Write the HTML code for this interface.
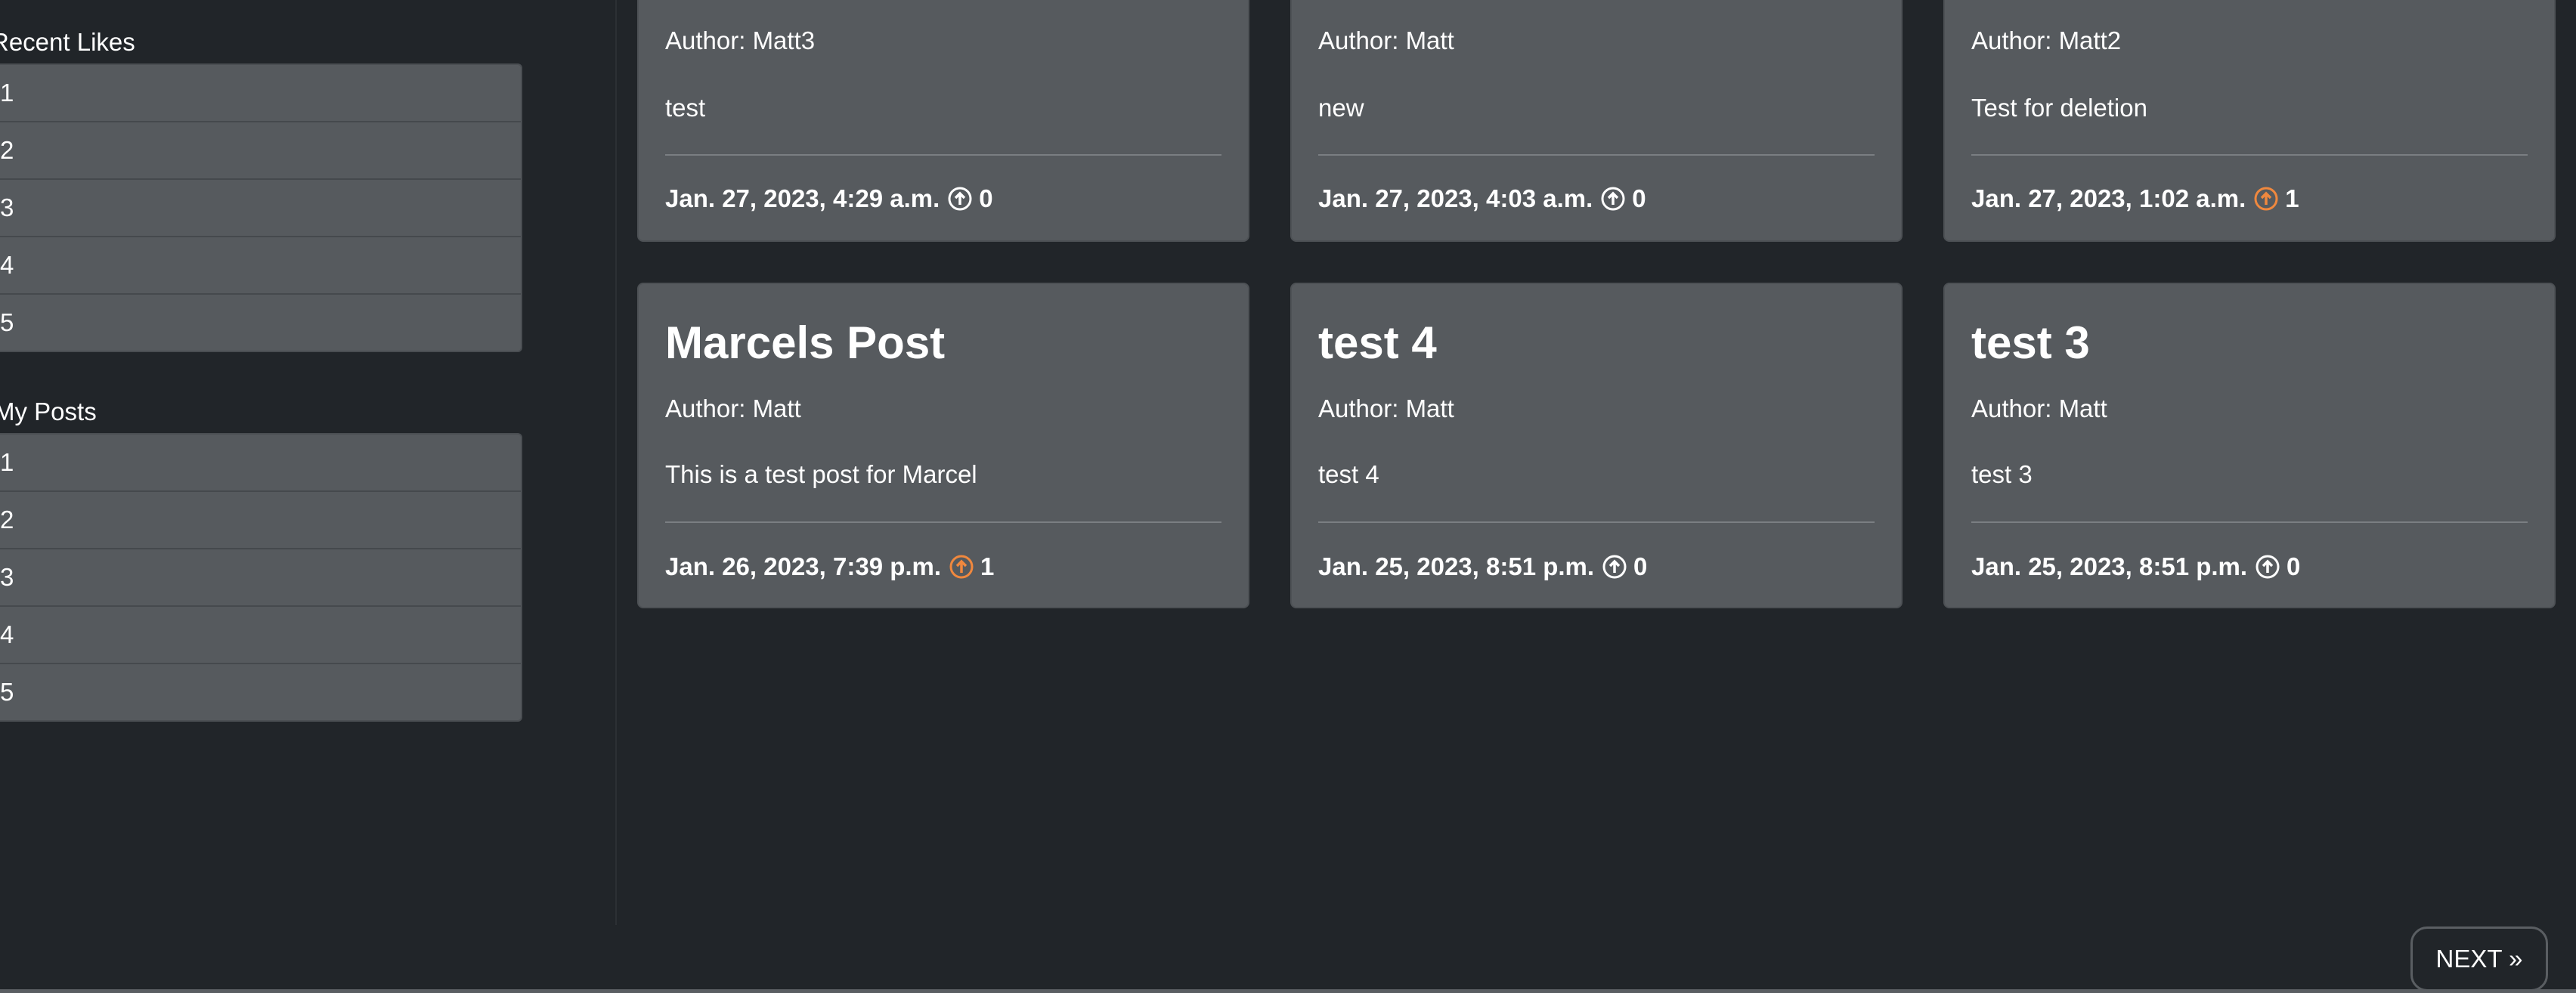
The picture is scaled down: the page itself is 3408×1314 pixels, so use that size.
<!DOCTYPE html>
<html><head><meta charset="utf-8"><style>
html,body{margin:0;padding:0;width:3408px;height:1314px;overflow:hidden;background:#212529;color:#fff;font-family:"Liberation Sans",sans-serif;}
.a{position:absolute;white-space:nowrap;}
.lbl{font-size:33px;line-height:40px;}
.list{position:absolute;left:-20px;width:711px;background:#565a5e;border:2px solid #4a4e52;border-radius:6px;box-sizing:border-box;}
.list div{height:76px;border-bottom:2px solid #45494d;box-sizing:border-box;font-size:33px;line-height:74px;padding-left:18px;}
.list div:last-child{border-bottom:none;}
.card{position:absolute;width:810px;background:#565a5e;border:2px solid #4d5155;border-radius:8px;box-sizing:border-box;}
.t{position:absolute;left:35px;font-size:60px;font-weight:bold;line-height:70px;}
.au{position:absolute;left:35px;font-size:33px;line-height:40px;}
.hr{position:absolute;left:35px;right:35px;height:2px;background:#7a7e82;}
.dt{position:absolute;left:35px;font-size:33px;font-weight:600;line-height:40px;display:flex;align-items:center;}
.dt svg{margin:0 8px 0 10px;}
</style></head><body>
<div class="a lbl" style="left:-12px;top:36px">Recent Likes</div>
<div class="list" style="top:84px;height:382px"><div>1</div><div>2</div><div>3</div><div>4</div><div>5</div></div>
<div class="a lbl" style="left:-8px;top:525px">My Posts</div>
<div class="list" style="top:573px;height:382px"><div>1</div><div>2</div><div>3</div><div>4</div><div>5</div></div>
<div class="a" style="left:814px;top:0;width:2px;height:1224px;background:#2c3034"></div>

<div class="card" style="left:843px;top:-20px;height:340px">
<div class="au" style="top:52px">Author: Matt3</div><div class="au" style="top:141px">test</div>
<div class="hr" style="top:222px"></div>
<div class="dt" style="top:261px">Jan. 27, 2023, 4:29 a.m.<svg width="34" height="34" viewBox="0 0 34 34"><circle cx="17" cy="17" r="14" fill="none" stroke="#fff" stroke-width="3"/><path d="M17 25V10M11 16l6-6 6 6" fill="none" stroke="#fff" stroke-width="3.5"/></svg>0</div></div>
<div class="card" style="left:1707px;top:-20px;height:340px">
<div class="au" style="top:52px">Author: Matt</div><div class="au" style="top:141px">new</div>
<div class="hr" style="top:222px"></div>
<div class="dt" style="top:261px">Jan. 27, 2023, 4:03 a.m.<svg width="34" height="34" viewBox="0 0 34 34"><circle cx="17" cy="17" r="14" fill="none" stroke="#fff" stroke-width="3"/><path d="M17 25V10M11 16l6-6 6 6" fill="none" stroke="#fff" stroke-width="3.5"/></svg>0</div></div>
<div class="card" style="left:2571px;top:-20px;height:340px">
<div class="au" style="top:52px">Author: Matt2</div><div class="au" style="top:141px">Test for deletion</div>
<div class="hr" style="top:222px"></div>
<div class="dt" style="top:261px">Jan. 27, 2023, 1:02 a.m.<svg width="34" height="34" viewBox="0 0 34 34"><circle cx="17" cy="17" r="14" fill="none" stroke="#f0883e" stroke-width="3"/><path d="M17 25V10M11 16l6-6 6 6" fill="none" stroke="#f0883e" stroke-width="3.5"/></svg>1</div></div>

<div class="card" style="left:843px;top:374px;height:431px">
<div class="t" style="top:43px">Marcels Post</div>
<div class="au" style="top:145px">Author: Matt</div><div class="au" style="top:232px">This is a test post for Marcel</div>
<div class="hr" style="top:314px"></div>
<div class="dt" style="top:354px">Jan. 26, 2023, 7:39 p.m.<svg width="34" height="34" viewBox="0 0 34 34"><circle cx="17" cy="17" r="14" fill="none" stroke="#f0883e" stroke-width="3"/><path d="M17 25V10M11 16l6-6 6 6" fill="none" stroke="#f0883e" stroke-width="3.5"/></svg>1</div></div>
<div class="card" style="left:1707px;top:374px;height:431px">
<div class="t" style="top:43px">test 4</div>
<div class="au" style="top:145px">Author: Matt</div><div class="au" style="top:232px">test 4</div>
<div class="hr" style="top:314px"></div>
<div class="dt" style="top:354px">Jan. 25, 2023, 8:51 p.m.<svg width="34" height="34" viewBox="0 0 34 34"><circle cx="17" cy="17" r="14" fill="none" stroke="#fff" stroke-width="3"/><path d="M17 25V10M11 16l6-6 6 6" fill="none" stroke="#fff" stroke-width="3.5"/></svg>0</div></div>
<div class="card" style="left:2571px;top:374px;height:431px">
<div class="t" style="top:43px">test 3</div>
<div class="au" style="top:145px">Author: Matt</div><div class="au" style="top:232px">test 3</div>
<div class="hr" style="top:314px"></div>
<div class="dt" style="top:354px">Jan. 25, 2023, 8:51 p.m.<svg width="34" height="34" viewBox="0 0 34 34"><circle cx="17" cy="17" r="14" fill="none" stroke="#fff" stroke-width="3"/><path d="M17 25V10M11 16l6-6 6 6" fill="none" stroke="#fff" stroke-width="3.5"/></svg>0</div></div>

<div class="a" style="left:0;top:1309px;width:3408px;height:5px;background:#5a5e62"></div>
<div class="a" style="left:3189px;top:1226px;width:182px;height:86px;border:3px solid #5a5e62;border-radius:22px;box-sizing:border-box;background:#212529;font-size:33px;line-height:80px;text-align:center">NEXT »</div>
</body></html>
